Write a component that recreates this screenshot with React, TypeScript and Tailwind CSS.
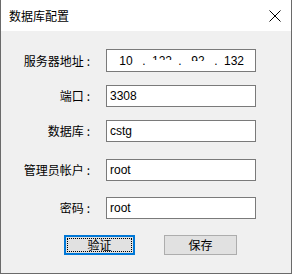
import React from 'react';

const cjk = "font-['Microsoft_YaHei','Noto_Sans_CJK_SC',sans-serif]";
const latin = "font-['Liberation_Sans','Noto_Sans_CJK_SC',sans-serif]";

function Label({ text }: { text: string }) {
  return (
    <div className={`w-[92px] shrink-0 pr-[3px] text-right text-[12px] leading-[16px] text-black ${cjk}`}>
      {text}
      <span className="ml-[3px]">:</span>
    </div>
  );
}

function Field({ value }: { value: string }) {
  return (
    <div
      className={`ml-[13px] flex h-[22px] w-[150px] items-center border border-[#7a7a7a] bg-white pl-[3px] text-[12px] leading-[14px] text-black ${latin}`}
    >
      {value}
    </div>
  );
}

// the middle octets are drawn half cut, as in the original control
function IpField() {
  const octet = 'w-[28px] text-center';
  const dot = 'w-[8px] text-center';
  return (
    <div
      className={`ml-[13px] flex h-[23px] w-[150px] items-center border border-[#7a7a7a] bg-white pl-[5px] text-[12px] leading-[14px] text-black ${latin}`}
    >
      <span className={octet}>10</span>
      <span className={dot}>.</span>
      <span className={`${octet} h-[14px]`}>
        <span className="block h-[6px] overflow-hidden">122</span>
      </span>
      <span className={dot}>.</span>
      <span className={`${octet} h-[14px]`}>
        <span className="block h-[7px] overflow-hidden">92</span>
      </span>
      <span className={dot}>.</span>
      <span className={octet}>132</span>
    </div>
  );
}

export default function App() {
  return (
    <div className="flex h-[274px] w-[292px] flex-col border-x border-b border-[#6a6a6a] bg-[#f0f0f0]">
      {/* title bar */}
      <div className="flex h-[31px] shrink-0 items-center justify-between bg-white pl-[8px] pr-[10px]">
        <span className={`text-[12px] text-black ${cjk}`}>数据库配置</span>
        <svg width="12" height="12" viewBox="0 0 12 12">
          <path d="M0.5 0.5 L11.5 11.5 M11.5 0.5 L0.5 11.5" stroke="#000" strokeWidth="1" />
        </svg>
      </div>

      <div className="flex flex-col pt-[18px]">
        <div className="flex items-center">
          <Label text="服务器地址" />
          <IpField />
        </div>
        <div className="mt-[13px] flex items-center">
          <Label text="端口" />
          <Field value="3308" />
        </div>
        <div className="mt-[13px] flex items-center">
          <Label text="数据库" />
          <Field value="cstg" />
        </div>
        <div className="mt-[17px] flex items-center">
          <Label text="管理员帐户" />
          <Field value="root" />
        </div>
        <div className="mt-[16px] flex items-center">
          <Label text="密码" />
          <Field value="root" />
        </div>

        <div className="mt-[16px] flex items-center pl-[63px]">
          <button
            className={`relative flex h-[20px] w-[71px] items-center justify-center border-2 border-[#0078d7] bg-[#e1e1e1] text-[12px] text-black ${cjk}`}
          >
            <span className="absolute inset-[1px] border border-dotted border-black" />
            验证
          </button>
          <button
            className={`ml-[29px] flex h-[20px] w-[73px] items-center justify-center border border-[#adadad] bg-[#e1e1e1] text-[12px] text-black ${cjk}`}
          >
            保存
          </button>
        </div>
      </div>
    </div>
  );
}
